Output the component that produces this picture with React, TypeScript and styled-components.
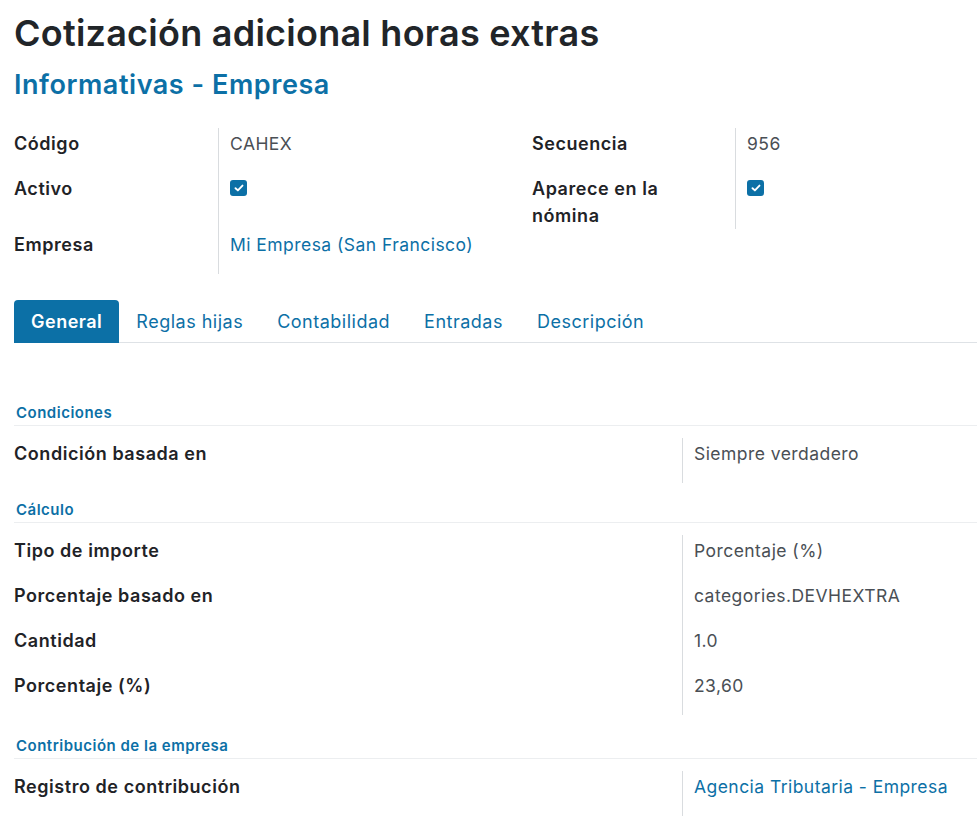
import React from "react";
import styled, { createGlobalStyle } from "styled-components";

const BLUE = "#0c70a6";

const GlobalStyle = createGlobalStyle`
  body {
    margin: 0;
    background: #ffffff;
    font-family: Inter, "Noto Sans", "Liberation Sans", sans-serif;
    color: #212529;
  }
`;

const Sheet = styled.div`
  padding: 12px 0 0 14px;
  width: 963px;
  overflow: hidden;
`;

const Title = styled.h1`
  margin: 0;
  font-size: 36px;
  line-height: 43px;
  font-weight: 600;
  color: #212529;
  letter-spacing: 0.25px;
`;

const Subtitle = styled.h2`
  margin: 14px 0 0;
  font-size: 27px;
  line-height: 32px;
  font-weight: 600;
  color: ${BLUE};
  letter-spacing: 0.55px;
`;

const HeaderGrid = styled.div`
  display: grid;
  grid-template-columns: 204px 314px 203px 1fr;
  margin-top: 27px;
`;

interface CellProps {
  $col?: number;
}

const Label = styled.div<CellProps>`
  grid-column: ${({ $col }): number => $col ?? 1};
  box-sizing: border-box;
  min-height: 45px;
  padding: 2px 12px 0 0;
  font-size: 18px;
  line-height: 27px;
  font-weight: 600;
  letter-spacing: 0.55px;
  color: #1f2327;
`;

interface ValueProps {
  $link?: boolean;
}

const Value = styled.div<ValueProps>`
  box-sizing: border-box;
  min-height: 45px;
  padding: 2px 0 0 11px;
  border-left: 1px solid #d9dcdf;
  font-size: 17.5px;
  line-height: 27px;
  letter-spacing: 0.45px;
  color: ${({ $link }): string => ($link ? BLUE : "#4a4f55")};
  white-space: nowrap;
`;

const Check = styled.span`
  display: inline-flex;
  align-items: center;
  justify-content: center;
  width: 17px;
  height: 16px;
  margin-top: 5px;
  border-radius: 3px;
  background: ${BLUE};
  vertical-align: top;
`;

function CheckBox(): JSX.Element {
  return (
    <Check>
      <svg width="10" height="8" viewBox="0 0 10 8">
        <path
          d="M1.5 4.2 L3.9 6.4 L8.5 1.6"
          fill="none"
          stroke="#fff"
          strokeWidth="1.9"
          strokeLinecap="round"
          strokeLinejoin="round"
        />
      </svg>
    </Check>
  );
}

const TabBar = styled.div`
  display: flex;
  margin-top: 26px;
  border-bottom: 1px solid #dee2e6;
`;

interface TabProps {
  $active?: boolean;
}

const Tab = styled.div<TabProps>`
  height: 43px;
  margin-bottom: -1px;
  padding: 0 17px;
  display: flex;
  align-items: center;
  font-size: 18px;
  letter-spacing: 0.5px;
  font-weight: ${({ $active }): number => ($active ? 600 : 400)};
  color: ${({ $active }): string => ($active ? "#ffffff" : BLUE)};
  background: ${({ $active }): string => ($active ? BLUE : "transparent")};
  border-radius: 4px 4px 0 0;
`;

const TabPane = styled.div`
  padding-top: 60px;
`;

interface SectionTitleProps {
  $space?: number;
}

const SectionTitle = styled.div<SectionTitleProps>`
  margin-top: ${({ $space }): number => $space ?? 0}px;
  padding: 0 0 2px 2px;
  font-size: 15px;
  line-height: 20px;
  font-weight: 600;
  letter-spacing: 0.5px;
  color: ${BLUE};
  border-bottom: 1px solid #eceef0;
`;

const FieldGrid = styled.div`
  display: grid;
  grid-template-columns: 668px 1fr;
  margin-top: 12px;
`;

const tabs = ["General", "Reglas hijas", "Contabilidad", "Entradas", "Descripción"];

interface Field {
  label: string;
  value: string;
  link?: boolean;
}

const sections: { title: string; space: number; fields: Field[] }[] = [
  {
    title: "Condiciones",
    space: 0,
    fields: [{ label: "Condición basada en", value: "Siempre verdadero" }]
  },
  {
    title: "Cálculo",
    space: 17,
    fields: [
      { label: "Tipo de importe", value: "Porcentaje (%)" },
      { label: "Porcentaje basado en", value: "categories.DEVHEXTRA" },
      { label: "Cantidad", value: "1.0" },
      { label: "Porcentaje (%)", value: "23,60" }
    ]
  },
  {
    title: "Contribución de la empresa",
    space: 21,
    fields: [
      {
        label: "Registro de contribución",
        value: "Agencia Tributaria - Empresa",
        link: true
      }
    ]
  }
];

export default function App(): JSX.Element {
  return (
    <>
      <GlobalStyle />
      <Sheet>
        <Title>Cotización adicional horas extras</Title>
        <Subtitle>Informativas - Empresa</Subtitle>

        <HeaderGrid>
          <Label>Código</Label>
          <Value>CAHEX</Value>
          <Label $col={3}>Secuencia</Label>
          <Value>956</Value>

          <Label>Activo</Label>
          <Value>
            <CheckBox />
          </Value>
          <Label $col={3}>
            Aparece en la
            <br />
            nómina
          </Label>
          <Value>
            <CheckBox />
          </Value>

          <Label>Empresa</Label>
          <Value $link>Mi Empresa (San Francisco)</Value>
        </HeaderGrid>

        <TabBar>
          {tabs.map((t, i) => (
            <Tab key={t} $active={i === 0}>
              {t}
            </Tab>
          ))}
        </TabBar>

        <TabPane>
          {sections.map(s => (
            <React.Fragment key={s.title}>
              <SectionTitle $space={s.space}>{s.title}</SectionTitle>
              <FieldGrid>
                {s.fields.map(f => (
                  <React.Fragment key={f.label}>
                    <Label>{f.label}</Label>
                    <Value $link={f.link}>{f.value}</Value>
                  </React.Fragment>
                ))}
              </FieldGrid>
            </React.Fragment>
          ))}
        </TabPane>
      </Sheet>
    </>
  );
}
